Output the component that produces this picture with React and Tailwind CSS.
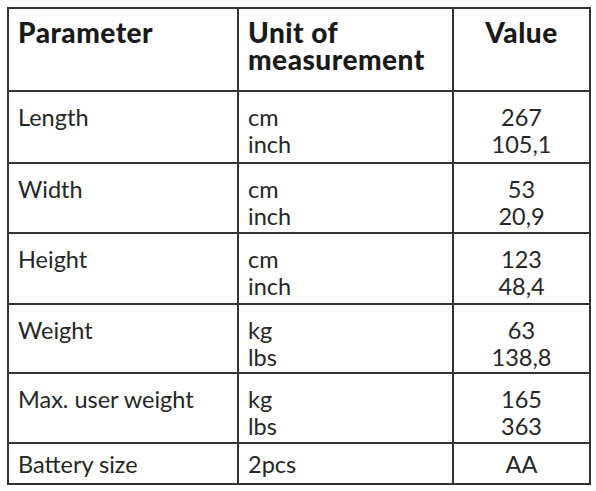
import React from "react";

const rows = [
  { p: "Length", u: ["cm", "inch"], v: ["267", "105,1"], h: "h-[72px]" },
  { p: "Width", u: ["cm", "inch"], v: ["53", "20,9"], h: "h-[70px]" },
  { p: "Height", u: ["cm", "inch"], v: ["123", "48,4"], h: "h-[71px]" },
  { p: "Weight", u: ["kg", "lbs"], v: ["63", "138,8"], h: "h-[69px]" },
  { p: "Max. user weight", u: ["kg", "lbs"], v: ["165", "363"], h: "h-[70px]" },
];

const head = "h-[83px] border-r-2 border-b-2 border-[#333] pt-[10px] font-black text-[28px] leading-[27px] tracking-[0.5px] text-[#1a1a1a]";

export default function App() {
  return (
    <div className="w-[596px] h-[491px] bg-white pt-[7px] pl-[7px]" style={{ fontFamily: "Lato, 'Noto Sans', sans-serif" }}>
      <div className="grid grid-cols-[230px_215px_137px] w-[584px] border-l-2 border-t-2 border-[#333] text-[#262626] text-[23.5px] leading-[27px]">
        <div className={`${head} pl-[9px]`}>Parameter</div>
        <div className={`${head} pl-[9px]`}>Unit of<br />measurement</div>
        <div className={`${head} text-center`}>Value</div>
        {rows.map((r) => (
          <React.Fragment key={r.p}>
            <div className={`${r.h} border-r-2 border-b-2 border-[#333] pl-[9px] pt-[12px]`}>{r.p}</div>
            <div className={`${r.h} border-r-2 border-b-2 border-[#333] pl-[9px] pt-[12px]`}>{r.u[0]}<br />{r.u[1]}</div>
            <div className={`${r.h} border-r-2 border-b-2 border-[#333] pt-[12px] text-center`}>{r.v[0]}<br />{r.v[1]}</div>
          </React.Fragment>
        ))}
        <div className="h-[41px] border-r-2 border-b-2 border-[#333] pl-[9px] pt-[7px]">Battery size</div>
        <div className="h-[41px] border-r-2 border-b-2 border-[#333] pl-[9px] pt-[7px]">2pcs</div>
        <div className="h-[41px] border-r-2 border-b-2 border-[#333] pt-[7px] text-center">AA</div>
      </div>
    </div>
  );
}
